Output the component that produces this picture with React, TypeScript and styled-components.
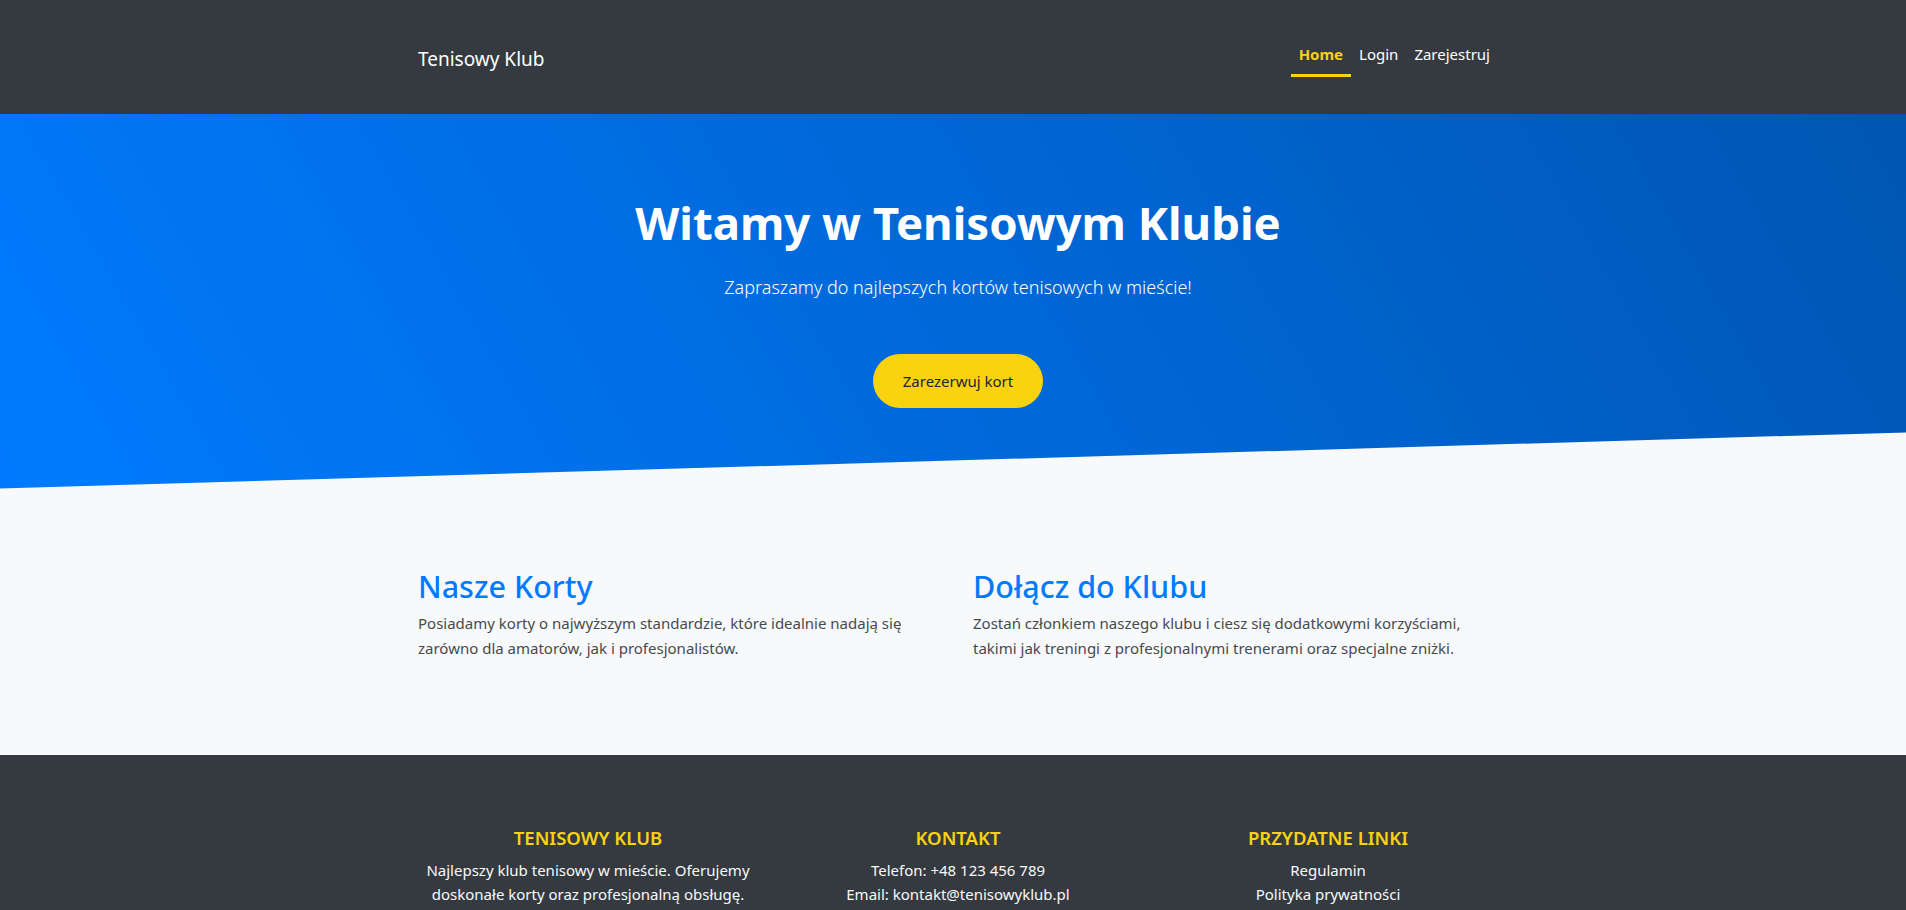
import React from "react";
import styled, { createGlobalStyle } from "styled-components";

const GlobalStyle = createGlobalStyle`
  html, body { margin: 0; padding: 0; }
  body {
    font-family: "Noto Sans", "Open Sans", sans-serif;
    font-size: 16px;
    line-height: 1.5;
    color: #212529;
    background: #f8f9fa;
  }
  * { box-sizing: border-box; }
`;

const Container = styled.div`
  width: 1110px;
  margin: 0 auto 0 calc(50% - 550px);
`;

const Navbar = styled.header`
  background: #343a40;
  height: 114px;
`;

const NavInner = styled(Container)`
  height: 100%;
  display: flex;
  align-items: center;
  justify-content: space-between;
  padding: 0 15px;
`;

const Brand = styled.a`
  color: #ffffff;
  font-size: 19px;
  line-height: 30px;
  text-decoration: none;
  margin-top: 4px;
`;

const NavList = styled.nav`
  display: flex;
  align-items: center;
`;

const NavLink = styled.a<{ $active?: boolean }>`
  display: block;
  padding: 8px 8px 8px;
  line-height: 24px;
  font-size: 15px;
  text-decoration: none;
  color: ${(p) => (p.$active ? "#f9d30f" : "#ffffff")};
  font-weight: ${(p) => (p.$active ? 700 : 400)};
  border-bottom: 3px solid ${(p) => (p.$active ? "#f9d30f" : "transparent")};
  margin-top: -4px;
`;

const Hero = styled.section`
  background: linear-gradient(60deg, #007bff 0%, #0056b3 100%);
  clip-path: polygon(0 0, 100% 0, 100% 85%, 0 100%);
  padding: 80px 0 81px 10px;
  text-align: center;
  color: #ffffff;
`;

const HeroTitle = styled.h1`
  margin: 0 0 20px;
  font-size: 45.5px;
  line-height: 57.6px;
  font-weight: 700;
`;

const HeroLead = styled.p`
  margin: 0 0 52px;
  font-size: 18px;
  line-height: 30px;
  font-weight: 300;
`;

const CtaButton = styled.a`
  display: inline-block;
  background: #f9d30f;
  color: #212529;
  border-radius: 50px;
  width: 170px;
  height: 54px;
  line-height: 54px;
  font-size: 15px;
  text-decoration: none;
`;

const Features = styled.section`
  background: #f8f9fa;
  padding: 78px 0 79px;
`;

const FeatureRow = styled(Container)`
  display: grid;
  grid-template-columns: 1fr 1fr;
`;

const FeatureCol = styled.div`
  padding: 0 15px;
`;

const FeatureTitle = styled.h2`
  margin: 0 0 6px;
  font-size: 30.5px;
  line-height: 38.4px;
  font-weight: 500;
  color: #007bff;
`;

const FeatureText = styled.p`
  margin: 0 0 16px;
  font-size: 15px;
  line-height: 24.5px;
  color: #464a4f;
`;

const Footer = styled.footer`
  background: #343a40;
  padding: 71px 0 40px;
  color: #f8f9fa;
`;

const FooterRow = styled(Container)`
  display: grid;
  grid-template-columns: repeat(3, 1fr);
`;

const FooterCol = styled.div`
  padding: 0 15px;
  text-align: center;
`;

const FooterTitle = styled.h5`
  margin: 0 0 8px;
  font-size: 18.5px;
  line-height: 24px;
  font-weight: 600;
  color: #f9d30f;
  text-transform: uppercase;
`;

const FooterText = styled.p`
  margin: 0;
  font-size: 15px;
  line-height: 24px;
`;

const FooterLinks = styled.ul`
  list-style: none;
  margin: 0;
  padding: 0;
`;

const FooterLink = styled.a`
  color: #f8f9fa;
  text-decoration: none;
  font-size: 15px;
  line-height: 24px;
`;

export default function App() {
  return (
    <>
      <GlobalStyle />
      <Navbar>
        <NavInner>
          <Brand href="#">Tenisowy Klub</Brand>
          <NavList>
            <NavLink href="#" $active>Home</NavLink>
            <NavLink href="#">Login</NavLink>
            <NavLink href="#">Zarejestruj</NavLink>
          </NavList>
        </NavInner>
      </Navbar>
      <Hero>
        <HeroTitle>Witamy w Tenisowym Klubie</HeroTitle>
        <HeroLead>Zapraszamy do najlepszych kortów tenisowych w mieście!</HeroLead>
        <CtaButton href="#">Zarezerwuj kort</CtaButton>
      </Hero>
      <Features>
        <FeatureRow>
          <FeatureCol>
            <FeatureTitle>Nasze Korty</FeatureTitle>
            <FeatureText>
              Posiadamy korty o najwyższym standardzie, które idealnie nadają się zarówno dla amatorów, jak i profesjonalistów.
            </FeatureText>
          </FeatureCol>
          <FeatureCol>
            <FeatureTitle>Dołącz do Klubu</FeatureTitle>
            <FeatureText>
              Zostań członkiem naszego klubu i ciesz się dodatkowymi korzyściami, takimi jak treningi z profesjonalnymi trenerami oraz specjalne zniżki.
            </FeatureText>
          </FeatureCol>
        </FeatureRow>
      </Features>
      <Footer>
        <FooterRow>
          <FooterCol>
            <FooterTitle>Tenisowy Klub</FooterTitle>
            <FooterText>
              Najlepszy klub tenisowy w mieście. Oferujemy doskonałe korty oraz profesjonalną obsługę.
            </FooterText>
          </FooterCol>
          <FooterCol>
            <FooterTitle>Kontakt</FooterTitle>
            <FooterText>Telefon: +48 123 456 789</FooterText>
            <FooterText>Email: kontakt@tenisowyklub.pl</FooterText>
          </FooterCol>
          <FooterCol>
            <FooterTitle>Przydatne Linki</FooterTitle>
            <FooterLinks>
              <li><FooterLink href="#">Regulamin</FooterLink></li>
              <li><FooterLink href="#">Polityka prywatności</FooterLink></li>
            </FooterLinks>
          </FooterCol>
        </FooterRow>
      </Footer>
    </>
  );
}
